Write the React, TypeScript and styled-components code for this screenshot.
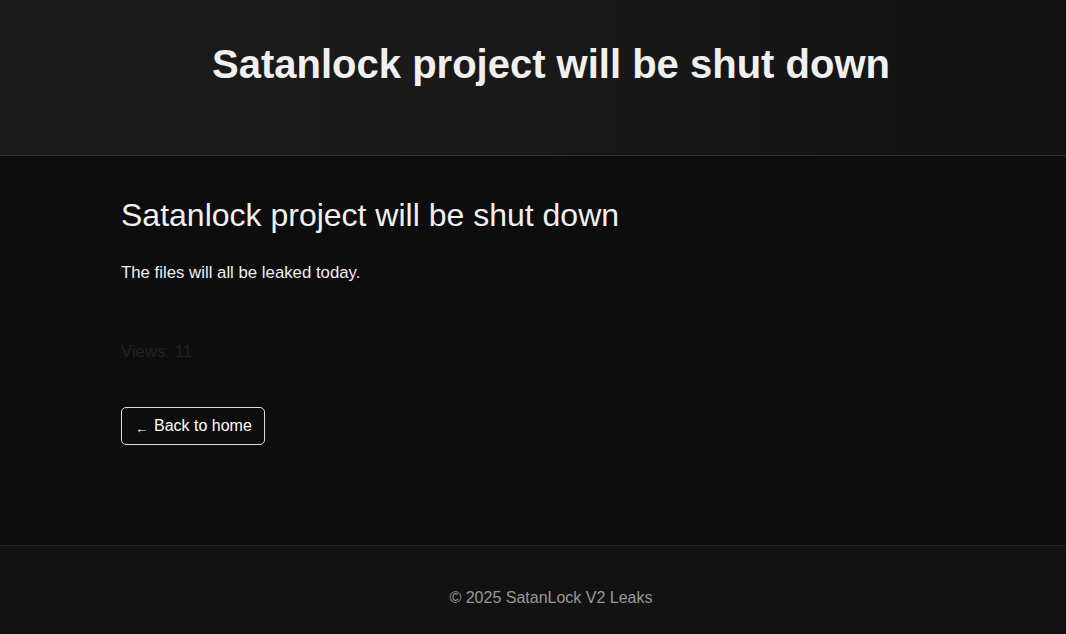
import React from "react";
import styled, { createGlobalStyle } from "styled-components";

const Global = createGlobalStyle`
  html, body { margin: 0; padding: 0; background: #0d0d0d; }
  body { font-family: "Liberation Sans", Arial, sans-serif; color: #eee; }
  * { box-sizing: border-box; }
`;

const Page = styled.div`
  min-height: 634px;
  display: flex;
  flex-direction: column;
`;

const Header = styled.header`
  height: 156px;
  background: linear-gradient(90deg, #1b1b1b 0%, #191919 50%, #121212 100%);
  border-bottom: 1px solid #333;
  display: flex;
  align-items: center;
  justify-content: center;
  padding-left: 36px;
  padding-bottom: 26px;
`;

const HeaderTitle = styled.h1`
  margin: 0;
  font-size: 40px;
  font-weight: bold;
  color: #f0f0f0;
`;

const Main = styled.main`
  background: #0d0d0d;
  height: 389px;
`;

const Container = styled.div`
  width: 824px;
  margin: 0 auto;
  padding-top: 39px;
`;

const PostTitle = styled.h2`
  margin: 0;
  font-size: 32px;
  font-weight: normal;
  line-height: 40px;
  color: #f0f0f0;
`;

const Body = styled.p`
  margin: 28px 0 0;
  font-size: 16.8px;
  line-height: 20px;
  color: #f0f0f0;
`;

const Views = styled.p`
  margin: 59px 0 0;
  font-size: 16.8px;
  line-height: 20px;
  color: #222;
`;

const BackButton = styled.a`
  display: inline-flex;
  align-items: center;
  margin-top: 45px;
  height: 38px;
  padding: 0 12px 0 13px;
  border: 1px solid #ddd;
  border-radius: 5px;
  color: #fff;
  font-size: 16px;
  text-decoration: none;
`;

const Arrow = styled.span`
  font-size: 13px;
  margin-right: 6px;
  position: relative;
  top: 2px;
`;

const Footer = styled.footer`
  flex: 1;
  background: #121212;
  border-top: 1px solid #222;
  display: flex;
  align-items: center;
  justify-content: center;
  padding-top: 16px;
  padding-left: 36px;
  font-size: 16px;
  color: #999;
`;

export default function App() {
  return (
    <Page>
      <Global />
      <Header>
        <HeaderTitle>Satanlock project will be shut down</HeaderTitle>
      </Header>
      <Main>
        <Container>
          <PostTitle>Satanlock project will be shut down</PostTitle>
          <Body>The files will all be leaked today.</Body>
          <Views>Views: 11</Views>
          <BackButton href="#">
            <Arrow>←</Arrow>Back to home
          </BackButton>
        </Container>
      </Main>
      <Footer>© 2025 SatanLock V2 Leaks</Footer>
    </Page>
  );
}
